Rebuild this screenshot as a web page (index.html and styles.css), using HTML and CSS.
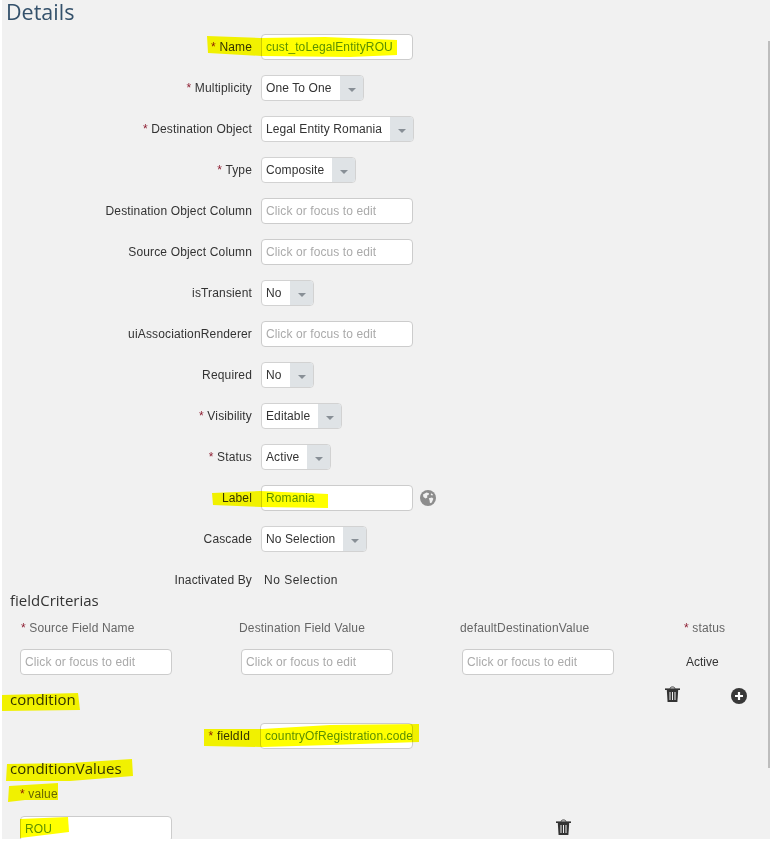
FILE: index.html
```html
<!DOCTYPE html>
<html lang="en">
<head>
  <meta charset="UTF-8" />
  <title>Details</title>
  <link rel="stylesheet" href="styles.css">
</head>
<body>
  <div class="page">
    <h1 class="title">Details</h1>

    <!-- Main form -->
    <div class="form">
      <label class="field-label"><span class="req">*</span> Name</label>
      <input class="text-input filled" type="text" value="cust_toLegalEntityROU" />

      <label class="field-label"><span class="req">*</span> Multiplicity</label>
      <div class="select"><span class="select-value">One To One</span><span class="select-arrow"></span></div>

      <label class="field-label"><span class="req">*</span> Destination Object</label>
      <div class="select"><span class="select-value">Legal Entity Romania</span><span class="select-arrow"></span></div>

      <label class="field-label"><span class="req">*</span> Type</label>
      <div class="select"><span class="select-value">Composite</span><span class="select-arrow"></span></div>

      <label class="field-label">Destination Object Column</label>
      <input class="text-input" type="text" placeholder="Click or focus to edit" />

      <label class="field-label">Source Object Column</label>
      <input class="text-input" type="text" placeholder="Click or focus to edit" />

      <label class="field-label">isTransient</label>
      <div class="select"><span class="select-value">No</span><span class="select-arrow"></span></div>

      <label class="field-label">uiAssociationRenderer</label>
      <input class="text-input" type="text" placeholder="Click or focus to edit" />

      <label class="field-label">Required</label>
      <div class="select"><span class="select-value">No</span><span class="select-arrow"></span></div>

      <label class="field-label"><span class="req">*</span> Visibility</label>
      <div class="select"><span class="select-value">Editable</span><span class="select-arrow"></span></div>

      <label class="field-label"><span class="req">*</span> Status</label>
      <div class="select"><span class="select-value">Active</span><span class="select-arrow"></span></div>

      <label class="field-label">Label</label>
      <div class="with-icon">
        <input class="text-input filled" type="text" value="Romania" />
        <svg class="globe" viewBox="0 0 16 16" width="16" height="16">
          <circle cx="8" cy="8" r="8" fill="#8d8d8d"/>
          <path d="M3 4.5 L6.5 2.6 L9 3.2 L8.6 5 L7 5.6 L7.4 7.4 L5.6 8.6 L3.4 7 Z" fill="#f1f1f1"/>
          <path d="M8.8 8.2 L12 7.4 L13.4 8.8 L11.8 12.4 L10 13.2 L9.6 10.6 Z" fill="#f1f1f1"/>
          <path d="M11 3.2 L13 4.4 L12.4 5.6 L10.8 5 Z" fill="#f1f1f1"/>
        </svg>
      </div>

      <label class="field-label">Cascade</label>
      <div class="select"><span class="select-value">No Selection</span><span class="select-arrow"></span></div>

      <label class="field-label">Inactivated By</label>
      <div class="plain-value">No Selection</div>
    </div>

    <!-- fieldCriterias -->
    <h2 class="section-title section-criteria">fieldCriterias</h2>
    <div class="criteria">
      <div class="col-label col-first"><span class="req">*</span> Source Field Name</div>
      <div class="col-label col-shift">Destination Field Value</div>
      <div class="col-label col-shift">defaultDestinationValue</div>
      <div class="col-label col-first"><span class="req">*</span> status</div>
      <input class="text-input" type="text" placeholder="Click or focus to edit" />
      <input class="text-input" type="text" placeholder="Click or focus to edit" />
      <input class="text-input" type="text" placeholder="Click or focus to edit" />
      <div class="col-value">Active</div>
    </div>

    <!-- condition -->
    <div class="condition-head">
      <h2 class="section-title">condition</h2>
      <div class="actions">
        <svg class="trash" viewBox="0 0 15 16" width="15" height="16">
          <path d="M5 2.6 C5 0.4 10 0.4 10 2.6" fill="none" stroke="#333" stroke-width="1"/>
          <rect x="0" y="2.4" width="15" height="1.6" fill="#333"/>
          <path d="M1.8 4 H13.2 L12.4 16 H2.6 Z" fill="#333"/>
          <path d="M5 6 V14 M7.5 6 V14 M10 6 V14" stroke="#f1f1f1" stroke-width="1"/>
        </svg>
        <svg class="plus" viewBox="0 0 16 16" width="16" height="16">
          <circle cx="8" cy="8" r="8" fill="#383838"/>
          <path d="M8 4 V12 M4 8 H12" stroke="#fff" stroke-width="2.2"/>
        </svg>
      </div>
    </div>
    <div class="form form-single">
      <label class="field-label field-label-tight"><span class="req">*</span> fieldId</label>
      <input class="text-input filled tight" type="text" value="countryOfRegistration.code" />
    </div>

    <!-- conditionValues -->
    <h2 class="section-title section-values">conditionValues</h2>
    <div class="col-label col-label-single"><span class="req">*</span> value</div>
    <div class="value-row">
      <input class="text-input filled" type="text" value="ROU" />
      <svg class="trash" viewBox="0 0 15 16" width="15" height="16">
        <path d="M5 2.6 C5 0.4 10 0.4 10 2.6" fill="none" stroke="#333" stroke-width="1"/>
        <rect x="0" y="2.4" width="15" height="1.6" fill="#333"/>
        <path d="M1.8 4 H13.2 L12.4 16 H2.6 Z" fill="#333"/>
        <path d="M5 6 V14 M7.5 6 V14 M10 6 V14" stroke="#f1f1f1" stroke-width="1"/>
      </svg>
    </div>

    <!-- marker strokes drawn over the screenshot -->
    <svg class="marker" viewBox="0 0 770 839" width="770" height="839">
      <path d="M207 36 L260 38 L325 37 L397 40 L397 55 L350 57 L262 56 L208 53 Z"/>
      <path d="M212 493 L260 491 L328 494 L328 508 L262 507 L213 505 Z"/>
      <path d="M0 695 L78 693 L80 710 L0 711 Z"/>
      <path d="M204 729 L262 729 L330 725 L419 724 L419 742 L330 745 L262 747 L204 746 Z"/>
      <path d="M7 764 L70 763 L132 759 L133 776 L70 781 L6 781 Z"/>
      <path d="M9 786 L58 783 L58 800 L25 800 L8 802 Z"/>
      <path d="M20 819 L68 817 L69 832 L20 838 Z"/>
    </svg>
    <div class="scroll-edge"></div>
  </div>
</body>
</html>
```

FILE: styles.css
```css
/* Global Reset */
* {
  margin: 0;
  padding: 0;
  box-sizing: border-box;
}
html, body {
  background: #fff;
}
body {
  font-family: 'Liberation Sans', Arial, sans-serif;
  font-size: 12px;
  color: #333;
  height: 845px;
  overflow: hidden;
}
.page {
  position: relative;
  height: 839px;
  overflow: hidden;
  margin-left: 2px;
  background: #f1f1f1;
}
/* Headings */
.title {
  font-family: 'Open Sans', sans-serif;
  font-size: 21.5px;
  font-weight: 400;
  line-height: 24px;
  color: #34516b;
  padding-left: 4px;
}
.section-title {
  font-family: 'Open Sans', sans-serif;
  font-size: 15px;
  font-weight: 400;
  line-height: 18px;
  color: #333;
  padding-left: 8px;
}
.section-criteria {
  margin-top: -2px;
}
.section-values {
  margin-top: 10px;
}
/* Main form */
.form {
  display: grid;
  grid-template-columns: 250px auto;
  justify-content: start;
  justify-items: start;
  align-items: center;
  column-gap: 9px;
  row-gap: 15px;
  margin-top: 10px;
}
.form-single {
  margin-top: 15px;
}
.field-label {
  justify-self: end;
  color: #333;
  letter-spacing: 0.15px;
}
.field-label-tight {
  padding-right: 2px;
}
.req {
  color: #8e1f33;
}
.text-input {
  width: 152px;
  height: 26px;
  padding: 0 4px;
  font-family: inherit;
  font-size: 12px;
  letter-spacing: 0.1px;
  color: #333;
  background: #fff;
  border: 1px solid #ccc;
  border-radius: 4px;
  outline: none;
}
.text-input::placeholder {
  color: #aaa;
  opacity: 1;
}
.text-input.filled {
  color: #5c9000;
}
.text-input.tight {
  width: 153px;
  margin-left: -1px;
  padding: 0 0 0 4px;
}
.select {
  display: inline-flex;
  height: 26px;
  background: #fff;
  border: 1px solid #d2d2d2;
  border-radius: 4px;
  overflow: hidden;
}
.select-value {
  line-height: 24px;
  padding: 0 8px 0 4px;
  letter-spacing: 0.1px;
  color: #333;
}
.select-arrow {
  position: relative;
  width: 23px;
  background: #dfe3e6;
}
.select-arrow::after {
  content: "";
  position: absolute;
  left: 8px;
  top: 12px;
  border-left: 4px solid transparent;
  border-right: 4px solid transparent;
  border-top: 4px solid #888f96;
}
.with-icon {
  display: flex;
  align-items: center;
  gap: 7px;
}
.plain-value {
  height: 26px;
  line-height: 26px;
  padding-left: 3px;
  letter-spacing: 0.5px;
  color: #333;
}
/* fieldCriterias table */
.criteria {
  display: grid;
  grid-template-columns: repeat(4, 221px);
  justify-items: start;
  align-items: center;
  row-gap: 14px;
  margin-top: 12px;
  padding-left: 18px;
}
.col-label {
  color: #666;
  letter-spacing: 0.15px;
  line-height: 14px;
}
.col-first {
  margin-left: 1px;
}
.col-shift {
  margin-left: -2px;
}
.col-label-single {
  margin-top: 10px;
  padding-left: 18px;
}
.col-value {
  padding-left: 3px;
  color: #333;
}
/* condition row */
.condition-head {
  display: flex;
  justify-content: space-between;
  margin-top: 15px;
  padding-right: 23px;
}
.actions {
  display: flex;
  align-items: flex-start;
  gap: 51px;
  height: 18px;
  margin-top: -4px;
}
.plus {
  margin-top: 2px;
}
.value-row {
  display: flex;
  align-items: flex-start;
  gap: 384px;
  margin-top: 15px;
  padding-left: 18px;
}
.value-row .trash {
  margin-top: 3px;
}
/* Marker highlights on top of the page */
.marker {
  position: absolute;
  left: -2px;
  top: 0;
  fill: #ffff00;
  mix-blend-mode: multiply;
  pointer-events: none;
}
.scroll-edge {
  position: absolute;
  right: 0;
  top: 41px;
  width: 2px;
  height: 727px;
  background: #bdbdbd;
}
```
